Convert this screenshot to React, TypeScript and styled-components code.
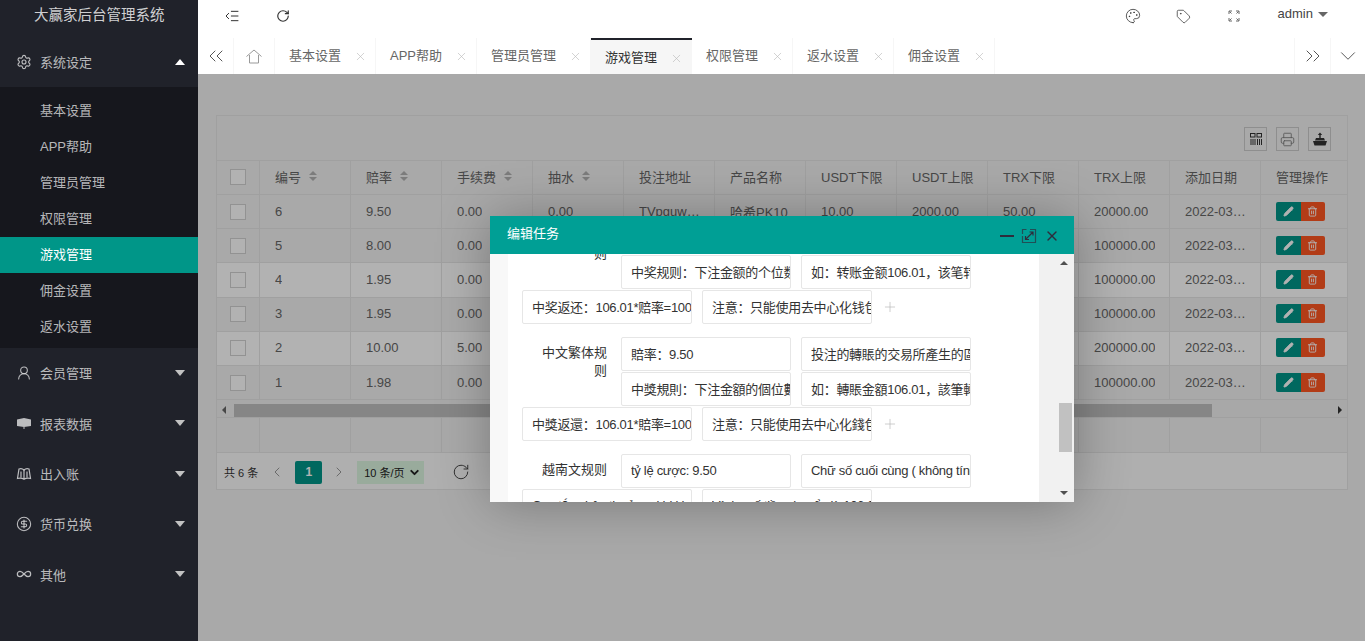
import React from "react";
import styled, { createGlobalStyle } from "styled-components";
import {
  ChevronDown,
  ChevronLeft,
  ChevronRight,
  ChevronsLeft,
  ChevronsRight,
  CircleDollarSign,
  IndentDecrease,
  Infinity as InfinityIcon,
  Palette,
  Pencil,
  Plus,
  Printer,
  RotateCw,
  Settings,
  Tag,
  Trash2,
  UserRound,
  X,
} from "lucide-react";

const GlobalStyle = createGlobalStyle`
  * { box-sizing: border-box; }
  html, body { margin: 0; height: 100%; overflow: hidden; }
  body {
    font-family: "Liberation Sans", "Noto Sans CJK SC", sans-serif;
    font-size: 13px;
    color: #666;
  }
`;

const Page = styled.div`
  display: flex;
  height: 100vh;
`;

const Sidebar = styled.aside`
  width: 198px;
  flex: none;
  background: #20222a;
  color: rgba(255, 255, 255, 0.7);
`;

const Logo = styled.div`
  height: 37px;
  padding-top: 2px;
  padding-left: 34px;
  font-size: 14.5px;
  line-height: 26px;
  color: rgba(255, 255, 255, 0.8);
`;

const MenuRow = styled.div`
  height: 50.3px;
  display: flex;
  align-items: center;
  padding: 0 13px 1px 16px;
  svg {
    width: 16px;
    height: 16px;
    margin-right: 8px;
    flex: none;
  }
  span {
    flex: 1;
  }
`;

const Caret = styled.i<{ $up?: boolean }>`
  width: 0;
  height: 0;
  border-style: solid;
  border-width: ${(p) => (p.$up ? "0 5.5px 6px" : "6px 5.5px 0")};
  border-color: ${(p) =>
    p.$up
      ? "transparent transparent #fff"
      : "#c2c2c2 transparent transparent"};
`;

const SubMenu = styled.div`
  background: #16171d;
  padding: 6px 0 3px;
`;

const SubItem = styled.div<{ $active?: boolean }>`
  height: 36px;
  line-height: 36px;
  padding-left: 40px;
  background: ${(p) => (p.$active ? "#009688" : "transparent")};
  color: ${(p) => (p.$active ? "#fff" : "rgba(255, 255, 255, 0.7)")};
`;

const Main = styled.main`
  flex: 1;
  min-width: 0;
  display: flex;
  flex-direction: column;
`;

const Header = styled.header`
  height: 38px;
  flex: none;
  background: #fff;
  display: flex;
  align-items: center;
  padding: 0 0 6px 26px;
  color: #333;
`;

const HeaderIcon = styled.span<{ $gap: number }>`
  width: 16px;
  height: 16px;
  margin-right: ${(p) => p.$gap}px;
  display: flex;
  align-items: center;
  justify-content: center;
  flex: none;
`;

const Spacer = styled.div`
  flex: 1;
`;

const UserName = styled.div`
  display: flex;
  align-items: center;
  gap: 5px;
  margin: -6px 37px 0 1px;
  color: #444;
`;

const UserCaret = styled.i`
  width: 0;
  height: 0;
  margin-top: 2px;
  border-style: solid;
  border-width: 5px 5px 0;
  border-color: #666 transparent transparent;
`;

const TabBar = styled.nav`
  height: 36px;
  flex: none;
  background: #fff;
  display: flex;
  position: relative;
  z-index: 2;
`;

const TabButton = styled.div<{ $width: number; $right?: boolean }>`
  width: ${(p) => p.$width}px;
  flex: none;
  display: flex;
  align-items: center;
  justify-content: center;
  color: #555;
  border-left: ${(p) => (p.$right ? "1px solid #f6f6f6" : "0")};
  border-right: ${(p) => (p.$right ? "0" : "1px solid #f6f6f6")};
`;

const Tab = styled.div<{ $active?: boolean }>`
  flex: none;
  display: flex;
  align-items: center;
  padding: 0 ${(p) => (p.$active ? "9px" : "8px")} ${(p) => (p.$active ? "2px" : "4px")} 14px;
  color: ${(p) => (p.$active ? "#333" : "#666")};
  background: ${(p) => (p.$active ? "#f6f6f6" : "#fff")};
  border-top: ${(p) => (p.$active ? "2px solid #20222a" : "0")};
  border-right: ${(p) => (p.$active ? "0" : "1px solid #f6f6f6")};
  svg {
    margin: 5px 0 0 13px;
    color: #bbb;
  }
`;

const Body = styled.section`
  flex: 1;
  position: relative;
  background: #f2f2f2;
  padding: 41px 17px 0 18px;
`;

const Card = styled.div`
  background: #fff;
  border: 1px solid #e6e6e6;
`;

const Toolbar = styled.div`
  height: 44px;
  display: flex;
  justify-content: flex-end;
  gap: 9px;
  padding: 11px 16px 0 0;
  background: #f2f2f2;
`;

const ToolButton = styled.div`
  width: 23px;
  height: 24px;
  border: 1px solid #ccc;
  display: flex;
  align-items: center;
  justify-content: center;
  color: #333;
`;

const GRID = "43px repeat(11, 91px) 86px";

const HeadRow = styled.div`
  display: grid;
  grid-template-columns: ${GRID};
  height: 35px;
  background: #f2f2f2;
  border-top: 1px solid #e6e6e6;
  border-bottom: 1px solid #e6e6e6;
`;

const Row = styled.div<{ $light?: boolean }>`
  display: grid;
  grid-template-columns: ${GRID};
  height: 34.2px;
  background: ${(p) => (p.$light ? "#fff" : "#f2f2f2")};
  border-bottom: 1px solid #e6e6e6;
`;

const Cell = styled.div`
  min-width: 0;
  padding: 0 13px 1px 15px;
  white-space: nowrap;
  overflow: hidden;
  border-right: 1px solid #e6e6e6;
  display: flex;
  align-items: center;
  &:last-child {
    border-right: 0;
  }
`;

const HeadCell = styled(Cell)`
  padding-bottom: 3px;
`;

const CellText = styled.span`
  white-space: nowrap;
  overflow: hidden;
  text-overflow: ellipsis;
`;

const CheckCell = styled(Cell)`
  padding: 0;
  justify-content: center;
`;

const HeadCheckCell = styled(CheckCell)`
  padding-bottom: 2px;
`;

const Check = styled.i`
  width: 16px;
  height: 16px;
  background: #fff;
  border: 1px solid #d2d2d2;
`;

const SortIcon = styled.i`
  display: inline-flex;
  flex-direction: column;
  gap: 2px;
  margin-left: 8px;
  flex: none;
  &::before,
  &::after {
    content: "";
    width: 0;
    height: 0;
    border-style: solid;
  }
  &::before {
    border-width: 0 4px 4px;
    border-color: transparent transparent #b2b2b2;
  }
  &::after {
    border-width: 4px 4px 0;
    border-color: #b2b2b2 transparent transparent;
  }
`;

const ActionGroup = styled.div`
  display: flex;
`;

const ActionButton = styled.div<{ $danger?: boolean }>`
  width: 24.5px;
  height: 19px;
  display: flex;
  align-items: center;
  justify-content: center;
  color: #fff;
  background: ${(p) => (p.$danger ? "#ff5722" : "#009688")};
  border-radius: ${(p) => (p.$danger ? "0 2px 2px 0" : "2px 0 0 2px")};
`;

const HScroll = styled.div`
  height: 18px;
  background: #f1f1f1;
  border-bottom: 1px solid #e6e6e6;
  display: flex;
  align-items: center;
  padding: 3px 3px 0 5px;
`;

const HThumb = styled.div`
  width: 978px;
  height: 13px;
  margin-left: 8px;
  background: #c1c1c1;
`;

const ArrowSide = styled.i<{ $dir: "left" | "right" }>`
  width: 0;
  height: 0;
  border-style: solid;
  border-width: ${(p) => (p.$dir === "left" ? "4px 4px 4px 0" : "4px 0 4px 4px")};
  border-color: ${(p) =>
    p.$dir === "left"
      ? "transparent #666 transparent transparent"
      : "transparent transparent transparent #333"};
  margin-left: ${(p) => (p.$dir === "right" ? "126px" : "0")};
`;

const TotalRow = styled(Row)`
  background: #f2f2f2;
  height: 35px;
`;

const Pager = styled.div`
  height: 36px;
  display: flex;
  align-items: center;
  padding: 2px 0 0 7px;
  font-size: 11px;
  color: #333;
  background: #fbfbfb;
`;

const PagerCount = styled.span`
  margin-right: 11px;
`;

const PagerCurrent = styled.div`
  width: 27px;
  height: 23px;
  margin: 0 9px 0 10px;
  border-radius: 2px;
  background: #009688;
  color: #fff;
  font-size: 12px;
  font-weight: 700;
  text-align: center;
  line-height: 23px;
`;

const PageSize = styled.div`
  width: 67px;
  height: 23px;
  margin: 0 28px 0 10px;
  padding: 0 3px 0 7px;
  background: #dcf5e0;
  display: flex;
  align-items: center;
  justify-content: space-between;
  white-space: nowrap;
  color: #222;
`;

const Shade = styled.div`
  position: absolute;
  inset: 0;
  background: rgba(0, 0, 0, 0.3);
`;

const Modal = styled.div`
  position: absolute;
  left: 292px;
  top: 142px;
  width: 584px;
  height: 286px;
  display: flex;
  flex-direction: column;
  background: #fff;
  box-shadow: 1px 1px 50px rgba(0, 0, 0, 0.3);
`;

const ModalTitle = styled.div`
  height: 38px;
  flex: none;
  background: #009f95;
  color: #fff;
  display: flex;
  align-items: center;
  padding: 0 14px 6px 17px;
`;

const ModalControls = styled.div`
  display: flex;
  align-items: center;
  gap: 7px;
  margin-top: 8px;
  color: #2e2d3c;
`;

const ModalBody = styled.div`
  flex: 1;
  min-height: 0;
  display: flex;
`;

const LeftGutter = styled.div`
  width: 18px;
  flex: none;
  background: #f8f8f8;
`;

const FormView = styled.div`
  flex: 1;
  overflow: hidden;
  background: #fff;
  padding-left: 14px;
`;

/* the form is scrolled: first group starts above the visible area */
const FormScroller = styled.div`
  margin-top: -34px;
  display: flex;
  flex-direction: column;
  gap: 13px;
`;

const RuleGroup = styled.div`
  display: grid;
  grid-template-columns: 99px 1fr;
  row-gap: 1px;
`;

const RuleLabel = styled.label<{ $rows: number }>`
  grid-row: span ${(p) => p.$rows};
  padding: 7px 14px 0 20px;
  text-align: right;
  line-height: 18px;
  color: #333;
`;

const InputLine = styled.div<{ $full?: boolean }>`
  display: flex;
  align-items: center;
  gap: 10px;
  grid-column: ${(p) => (p.$full ? "1 / -1" : "2")};
`;

const RuleInput = styled.input`
  width: 170px;
  height: 34px;
  flex: none;
  padding: 0 0 2px 9px;
  border: 1px solid #e6e6e6;
  border-radius: 2px;
  outline: 0;
  font: inherit;
  letter-spacing: -0.3px;
  color: #333;
  background: #fff;
`;

const AddIcon = styled.span`
  display: flex;
  color: #b5b5b5;
`;

const ScrollGutter = styled.div`
  width: 35px;
  flex: none;
  background: #f1f1f1;
  position: relative;
`;

const VArrow = styled.i<{ $down?: boolean }>`
  position: absolute;
  left: 21px;
  ${(p) => (p.$down ? "bottom: 7px;" : "top: 7px;")}
  width: 0;
  height: 0;
  border-style: solid;
  border-width: ${(p) => (p.$down ? "4px 4px 0" : "0 4px 4px")};
  border-color: ${(p) =>
    p.$down ? "#505050 transparent transparent" : "transparent transparent #505050"};
`;

const VThumb = styled.div`
  position: absolute;
  left: 20px;
  top: 149px;
  width: 13px;
  height: 49px;
  background: #c1c1c1;
`;

const ColsIcon = () => (
  <svg width="12" height="12" viewBox="0 0 12 12" fill="none" stroke="#333" strokeWidth="1">
    <rect x="0.500" y="0.500" width="4.500" height="3.500" />
    <rect x="7" y="0.500" width="4.500" height="3.500" />
    <path d="M1 6v6M3 6v6M5 6v6M7.500 6v6M9.500 6v6M11.500 6v6" />
  </svg>
);

const HomeIcon = () => (
  <svg width="16" height="15" viewBox="0 0 16 15" fill="none" stroke="#999" strokeWidth="1">
    <path d="M.500 7.500 8 1l7.500 6.500M3.500 6v8h9V6" />
  </svg>
);

const ExportIcon = () => (
  <svg width="14" height="14" viewBox="0 0 14 14" fill="currentColor">
    <path d="M0 9h14l-1.500 4.500h-11zM3 6h8l1 2.500H2z" />
    <path d="M6.300 6V3H4.800L7 .500 9.200 3H7.700v3z" />
  </svg>
);

const ReportIcon = () => (
  <svg width="16" height="16" viewBox="0 0 16 16" fill="currentColor">
    <path d="M1 4.500 8 3l7 1.500V11l-7 1-7-1z" />
    <path d="M7.500 12h1v2h-1z" />
  </svg>
);

const LedgerIcon = () => (
  <svg width="16" height="16" viewBox="0 0 16 16" fill="none" stroke="currentColor" strokeWidth="1.200">
    <path d="M8 4C6.500 2.600 4.500 2.400 3 3L1.500 12.500C3.500 12 6 12 8 13.200 10 12 12.500 12 14.500 12.500L13 3C11.500 2.400 9.500 2.600 8 4Z" />
    <path d="M8 4v9M5 5.500v6M11 5.500v6" />
  </svg>
);

const ResizeIcon = () => (
  <svg width="16" height="16" viewBox="0 0 16 16" fill="none" stroke="currentColor" strokeWidth="1.200">
    <path d="M9 1.500h5.500v13h-13V8M1.500 6V1.500h4" opacity="0.7" />
    <path d="M4.500 11.500 12 4M8.500 4H12v3.500M4.500 8v3.500H8" />
  </svg>
);

const menuTail: [string, React.ReactNode][] = [
  ["会员管理", <UserRound key="u" strokeWidth={1.6} />],
  ["报表数据", <ReportIcon key="r" />],
  ["出入账", <LedgerIcon key="l" />],
  ["货币兑换", <CircleDollarSign key="c" strokeWidth={1.6} />],
  ["其他", <InfinityIcon key="i" strokeWidth={1.8} />],
];

const subItems = ["基本设置", "APP帮助", "管理员管理", "权限管理", "游戏管理", "佣金设置", "返水设置"];
const tabs = ["基本设置", "APP帮助", "管理员管理", "游戏管理", "权限管理", "返水设置", "佣金设置"];
const columns = ["投注地址", "产品名称", "USDT下限", "USDT上限", "TRX下限", "TRX上限", "添加日期", "管理操作"];

const rows = [
  ["6", "9.50", "0.00", "0.00", "10.00", "2000.00", "50.00", "20000.00"],
  ["5", "8.00", "0.00", "0.00", "10.00", "5000.00", "50.00", "100000.00"],
  ["4", "1.95", "0.00", "0.00", "10.00", "5000.00", "50.00", "100000.00"],
  ["3", "1.95", "0.00", "0.00", "10.00", "5000.00", "50.00", "100000.00"],
  ["2", "10.00", "5.00", "0.00", "10.00", "10000.00", "50.00", "200000.00"],
  ["1", "1.98", "0.00", "0.00", "10.00", "5000.00", "50.00", "100000.00"],
];

export default function App() {
  return (
    <Page>
      <GlobalStyle />
      <Sidebar>
        <Logo>大赢家后台管理系统</Logo>
        <MenuRow>
          <Settings strokeWidth={1.7} />
          <span>系统设定</span>
          <Caret $up />
        </MenuRow>
        <SubMenu>
          {subItems.map((name) => (
            <SubItem key={name} $active={name === "游戏管理"}>
              {name}
            </SubItem>
          ))}
        </SubMenu>
        {menuTail.map(([name, icon]) => (
          <MenuRow key={name}>
            {icon}
            <span>{name}</span>
            <Caret />
          </MenuRow>
        ))}
      </Sidebar>
      <Main>
        <Header>
          <HeaderIcon $gap={35}>
            <IndentDecrease size={16} strokeWidth={1.5} />
          </HeaderIcon>
          <HeaderIcon $gap={0}>
            <RotateCw size={14} strokeWidth={2} />
          </HeaderIcon>
          <Spacer />
          <HeaderIcon $gap={35}>
            <Palette size={16} strokeWidth={1.2} />
          </HeaderIcon>
          <HeaderIcon $gap={34}>
            <Tag size={15} strokeWidth={1.2} />
          </HeaderIcon>
          <HeaderIcon $gap={35}>
            <svg width="12" height="12" viewBox="0 0 12 12" fill="none" stroke="#666" strokeWidth="1">
              <path d="M1 4V1h3M8 1h3v3M11 8v3H8M4 11H1V8M1.500 1.500l2 2M10.500 1.500l-2 2M10.500 10.500l-2-2M1.500 10.500l2-2" />
            </svg>
          </HeaderIcon>
          <UserName>
            admin
            <UserCaret />
          </UserName>
        </Header>
        <TabBar>
          <TabButton $width={36}>
            <ChevronsLeft size={24} strokeWidth={1} />
          </TabButton>
          <TabButton $width={41}>
            <HomeIcon />
          </TabButton>
          {tabs.map((name) => (
            <Tab key={name} $active={name === "游戏管理"}>
              {name}
              <X size={13} strokeWidth={1.2} />
            </Tab>
          ))}
          <Spacer />
          <TabButton $width={36} $right>
            <ChevronsRight size={24} strokeWidth={1} />
          </TabButton>
          <TabButton $width={35} $right>
            <ChevronDown size={26} strokeWidth={0.9} />
          </TabButton>
        </TabBar>
        <Body>
          <Card>
            <Toolbar>
              <ToolButton>
                <ColsIcon />
              </ToolButton>
              <ToolButton>
                <Printer size={15} strokeWidth={1.3} color="#777" />
              </ToolButton>
              <ToolButton>
                <ExportIcon />
              </ToolButton>
            </Toolbar>
            <HeadRow>
              <HeadCheckCell>
                <Check />
              </HeadCheckCell>
              {["编号", "赔率", "手续费", "抽水"].map((name) => (
                <HeadCell key={name}>
                  {name}
                  <SortIcon />
                </HeadCell>
              ))}
              {columns.map((name) => (
                <HeadCell key={name}>{name}</HeadCell>
              ))}
            </HeadRow>
            {rows.map((row, i) => (
              <Row key={row[0]} $light={i > 0 && i % 2 === 0}>
                <CheckCell>
                  <Check />
                </CheckCell>
                {row.slice(0, 4).map((value, c) => (
                  <Cell key={c}>
                    <CellText>{value}</CellText>
                  </Cell>
                ))}
                <Cell>
                  <CellText>TVpguwXk2LmQ9e</CellText>
                </Cell>
                <Cell>
                  <CellText>哈希PK10</CellText>
                </Cell>
                {row.slice(4).map((value, c) => (
                  <Cell key={c}>
                    <CellText>{value}</CellText>
                  </Cell>
                ))}
                <Cell>
                  <CellText>2022-03-15 12:30:00</CellText>
                </Cell>
                <Cell>
                  <ActionGroup>
                    <ActionButton>
                      <Pencil size={11} fill="currentColor" />
                    </ActionButton>
                    <ActionButton $danger>
                      <Trash2 size={11} />
                    </ActionButton>
                  </ActionGroup>
                </Cell>
              </Row>
            ))}
            <HScroll>
              <ArrowSide $dir="left" />
              <HThumb />
              <ArrowSide $dir="right" />
            </HScroll>
            <TotalRow>
              {Array.from({ length: 13 }, (_, i) => (
                <Cell key={i} />
              ))}
            </TotalRow>
            <Pager>
              <PagerCount>共 6 条</PagerCount>
              <ChevronLeft size={16} strokeWidth={1.5} color="#999" />
              <PagerCurrent>1</PagerCurrent>
              <ChevronRight size={16} strokeWidth={1.5} color="#999" />
              <PageSize>
                10 条/页
                <ChevronDown size={13} strokeWidth={3.5} />
              </PageSize>
              <RotateCw size={18} strokeWidth={1.2} />
            </Pager>
          </Card>
          <Shade />
          <Modal>
            <ModalTitle>
              编辑任务
              <Spacer />
              <ModalControls>
                <svg width="14" height="16" viewBox="0 0 14 16" fill="currentColor">
                  <rect x="0" y="7" width="14" height="2" />
                </svg>
                <ResizeIcon />
                <X size={16} strokeWidth={2} />
              </ModalControls>
            </ModalTitle>
            <ModalBody>
              <LeftGutter />
              <FormView>
                <FormScroller>
                  <RuleGroup>
                    <RuleLabel $rows={2}>中文简体规则</RuleLabel>
                    <InputLine>
                      <RuleInput readOnly defaultValue="赔率：9.50" />
                      <RuleInput readOnly defaultValue="投注的转账的交易所产生的区块哈希" />
                    </InputLine>
                    <InputLine>
                      <RuleInput readOnly defaultValue="中奖规则：下注金额的个位数字与区块" />
                      <RuleInput readOnly defaultValue="如：转账金额106.01，该笔转账的区块" />
                    </InputLine>
                    <InputLine $full>
                      <RuleInput readOnly defaultValue="中奖返还：106.01*赔率=1007.10" />
                      <RuleInput readOnly defaultValue="注意：只能使用去中心化钱包转账" />
                      <AddIcon>
                        <Plus size={16} strokeWidth={1} />
                      </AddIcon>
                    </InputLine>
                  </RuleGroup>
                  <RuleGroup>
                    <RuleLabel $rows={2}>中文繁体规则</RuleLabel>
                    <InputLine>
                      <RuleInput readOnly defaultValue="賠率：9.50" />
                      <RuleInput readOnly defaultValue="投注的轉賬的交易所產生的區塊哈希" />
                    </InputLine>
                    <InputLine>
                      <RuleInput readOnly defaultValue="中獎規則：下注金額的個位數字與區塊" />
                      <RuleInput readOnly defaultValue="如：轉賬金額106.01，該筆轉賬的區塊" />
                    </InputLine>
                    <InputLine $full>
                      <RuleInput readOnly defaultValue="中獎返還：106.01*賠率=1007.10" />
                      <RuleInput readOnly defaultValue="注意：只能使用去中心化錢包轉賬" />
                      <AddIcon>
                        <Plus size={16} strokeWidth={1} />
                      </AddIcon>
                    </InputLine>
                  </RuleGroup>
                  <RuleGroup>
                    <RuleLabel $rows={1}>越南文规则</RuleLabel>
                    <InputLine>
                      <RuleInput readOnly defaultValue="tỷ lệ cược: 9.50" />
                      <RuleInput readOnly defaultValue="Chữ số cuối cùng ( không tính phần thập phân )" />
                    </InputLine>
                    <InputLine $full>
                      <RuleInput readOnly defaultValue="Quy tắc nhận thưởng: khi khớp số" />
                      <RuleInput readOnly defaultValue="Ví dụ: số tiền chuyển là 106.01" />
                    </InputLine>
                  </RuleGroup>
                </FormScroller>
              </FormView>
              <ScrollGutter>
                <VArrow />
                <VThumb />
                <VArrow $down />
              </ScrollGutter>
            </ModalBody>
          </Modal>
        </Body>
      </Main>
    </Page>
  );
}
